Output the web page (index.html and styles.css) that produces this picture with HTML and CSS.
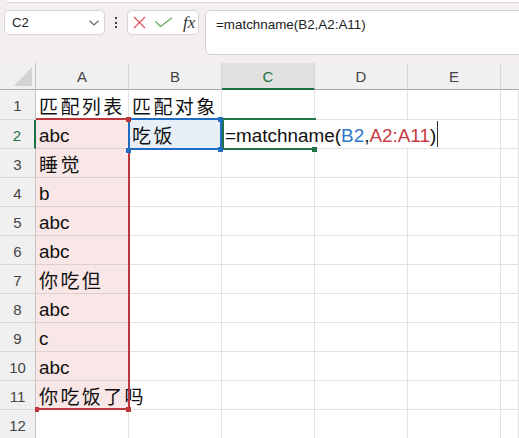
FILE: index.html
```html
<!DOCTYPE html>
<html lang="zh">
<head>
<meta charset="utf-8">
<title>Sheet</title>
<link rel="stylesheet" href="styles.css">
</head>
<body>
<div class="app">
  <div class="ribbon-edge"></div>
  <div class="fbar">
    <div class="namebox">
      <span class="name">C2</span>
      <svg class="chev" width="10" height="6" viewBox="0 0 10 6"><path d="M0.5 0.8 L5 5 L9.5 0.8" fill="none" stroke="#666" stroke-width="1.2"/></svg>
    </div>
    <div class="dots"><i></i><i></i><i></i></div>
    <div class="iconbox">
      <svg width="13" height="13" viewBox="0 0 13 13"><path d="M1 1 L12 12 M12 1 L1 12" stroke="#e2585d" stroke-width="1.3" fill="none"/></svg>
      <svg width="18" height="11" viewBox="0 0 18 11"><path d="M0.5 4.5 L5.5 9.5 L17 0.8" stroke="#5aad5e" stroke-width="1.3" fill="none"/></svg>
      <span class="fx">fx</span>
    </div>
    <div class="formula">=matchname(B2,A2:A11)</div>
  </div>
  <div class="sheet">
    <div class="hd corner"><svg width="18" height="19" viewBox="0 0 18 19"><path d="M18 0 L18 19 L0 19 Z" fill="#d3d3d3"/></svg></div>
    <div class="hd col">A</div>
    <div class="hd col">B</div>
    <div class="hd col active">C</div>
    <div class="hd col">D</div>
    <div class="hd col">E</div>
    <div class="hd col last"></div>

    <div class="rh">1</div><div class="c cjk">匹配列表</div><div class="c cjk">匹配对象</div><div class="c"></div><div class="c"></div><div class="c"></div><div class="c"></div>
    <div class="rh active">2</div><div class="c pk">abc</div><div class="c cjk bl">吃饭</div><div class="c"></div><div class="c"></div><div class="c"></div><div class="c"></div>
    <div class="rh">3</div><div class="c pk cjk">睡觉</div><div class="c"></div><div class="c"></div><div class="c"></div><div class="c"></div><div class="c"></div>
    <div class="rh">4</div><div class="c pk">b</div><div class="c"></div><div class="c"></div><div class="c"></div><div class="c"></div><div class="c"></div>
    <div class="rh">5</div><div class="c pk">abc</div><div class="c"></div><div class="c"></div><div class="c"></div><div class="c"></div><div class="c"></div>
    <div class="rh">6</div><div class="c pk">abc</div><div class="c"></div><div class="c"></div><div class="c"></div><div class="c"></div><div class="c"></div>
    <div class="rh">7</div><div class="c pk cjk">你吃但</div><div class="c"></div><div class="c"></div><div class="c"></div><div class="c"></div><div class="c"></div>
    <div class="rh">8</div><div class="c pk">abc</div><div class="c"></div><div class="c"></div><div class="c"></div><div class="c"></div><div class="c"></div>
    <div class="rh">9</div><div class="c pk">c</div><div class="c"></div><div class="c"></div><div class="c"></div><div class="c"></div><div class="c"></div>
    <div class="rh">10</div><div class="c pk">abc</div><div class="c"></div><div class="c"></div><div class="c"></div><div class="c"></div><div class="c"></div>
    <div class="rh">11</div><div class="c pk cjk">你吃饭了吗</div><div class="c"></div><div class="c"></div><div class="c"></div><div class="c"></div><div class="c"></div>
    <div class="rh">12</div><div class="c"></div><div class="c"></div><div class="c"></div><div class="c"></div><div class="c"></div><div class="c"></div>

    <div class="sel sel-a"></div>
    <div class="sel sel-b"></div>
    <div class="editor">=matchname(<span class="rb">B2</span>,<span class="rr">A2:A11</span>)<span class="caret"></span></div>
    <div class="sel sel-c"></div>
    <div class="hnd red h-a1"></div>
    <div class="hnd red h-a2"></div>
    <div class="hnd red h-a3"></div>
    <div class="hnd blue h-b2"></div>
    <div class="hnd blue h-b3"></div>
    <div class="hnd blue h-b4"></div>
    <div class="hnd green h-c1"></div>
  </div>
</div>
</body>
</html>
```
FILE: styles.css
```css
* { box-sizing: border-box; }
html, body { margin: 0; padding: 0; }
body {
  background: #f3eef0;
  font-family: "Liberation Sans", "Noto Sans CJK SC", sans-serif;
  color: #1a1a1a;
}
.app { width: 519px; height: 438px; overflow: hidden; }
.ribbon-edge {
  height: 3px;
  margin-left: 6px;
  background: #fff;
  border-bottom: 1px solid #ddd7d9;
  border-bottom-left-radius: 6px;
}
.fbar {
  display: flex;
  align-items: flex-start;
  height: 60px;
  padding: 7px 0 0 4px;
}
.namebox {
  width: 101px;
  height: 25px;
  background: #fff;
  border: 1px solid #d9d5d7;
  border-radius: 5px;
  display: flex;
  align-items: center;
  justify-content: space-between;
  padding: 0 5px 0 7px;
}
.name { font-size: 13px; color: #222; }
.chev { margin-top: 1px; }
.dots {
  width: 22px;
  height: 25px;
  display: flex;
  flex-direction: column;
  align-items: center;
  justify-content: center;
  gap: 2.5px;
}
.dots i { width: 2px; height: 2px; background: #444; display: block; }
.iconbox {
  width: 72px;
  height: 25px;
  background: #fff;
  border: 1px solid #d9d5d7;
  border-radius: 5px;
  display: flex;
  align-items: center;
  padding: 0 0 0 5px;
  gap: 9px;
}
.fx {
  font-family: "Liberation Serif", serif;
  font-style: italic;
  font-size: 17px;
  color: #333;
  margin-left: 1px;
}
.formula {
  flex: 1;
  height: 45px;
  margin-left: 6px;
  margin-right: -10px;
  background: #fff;
  border: 1px solid #d5d1d3;
  border-radius: 6px;
  font-size: 13.4px;
  color: #222;
  padding: 6px 0 0 10px;
  line-height: 16px;
}
.sheet {
  position: relative;
  background: #fff;
  display: grid;
  grid-template-columns: 36px repeat(5, 93px) 1fr;
  grid-template-rows: 27px 30px repeat(11, 29px);
}
.hd {
  background: #f0f0f0;
  border-right: 1px solid #d6d6d6;
  border-bottom: 1px solid #ababab;
  display: flex;
  align-items: center;
  justify-content: center;
  font-size: 15px;
  color: #444;
  padding-top: 1px;
}
.hd.corner { border-right-color: #c4c4c4; align-items: flex-end; justify-content: flex-end; padding: 0 3px 3px 0; }
.hd.last { border-right: none; }
.hd.active { background: #e1e1e1; color: #1e7145; border-bottom: 2px solid #1e7145; }
.rh {
  background: #f0f0f0;
  border-right: 1px solid #c4c4c4;
  border-bottom: 1px solid #d8d8d8;
  display: flex;
  align-items: center;
  justify-content: center;
  font-size: 15px;
  color: #444;
  padding-top: 2px;
}
.rh.active { color: #1e7145; border-right: 2px solid #1e7145; }
.c {
  border-right: 1px solid #e1e1e1;
  border-bottom: 1px solid #e1e1e1;
  display: flex;
  align-items: flex-end;
  padding: 0 0 2px 3px;
  font-size: 18.9px;
  line-height: 20px;
  white-space: nowrap;
  overflow: visible;
  color: #111;
}
.c.cjk {
  font-family: "Noto Sans CJK SC", sans-serif;
  font-size: 19px;
  letter-spacing: 2.4px;
  padding-bottom: 3px;
}
.c.pk { background: #f9e6e6; border-bottom-color: #dccfcf; border-right-color: #dccfcf; }
.c.bl { background: #e7eff9; }
.sel { position: absolute; pointer-events: none; }
.sel-a {
  left: 36px; top: 55px; width: 94px; height: 292px;
  border: 2px solid #bf353c; border-left: none;
}
.sel-b {
  left: 128px; top: 55px; width: 94px; height: 32px;
  border: 2px solid #1f6cc0;
}
.sel-c {
  left: 222px; top: 55px; width: 94px; height: 32px;
  border: 2px solid #217346; border-right: none;
}
.editor {
  position: absolute;
  left: 224px; top: 57px; width: 216px; height: 28px;
  background: #fff;
  font-size: 18.9px;
  line-height: 20px;
  padding: 6px 0 0 1px;
  white-space: nowrap;
  color: #111;
}
.rb { color: #2f78cc; }
.rr { color: #c73b44; }
.caret {
  position: absolute;
  left: 213px; top: 1px;
  width: 1px; height: 26px;
  background: #333;
}
.hnd { position: absolute; width: 5px; height: 5px; }
.hnd.red { background: #bf353c; }
.hnd.blue { background: #1f6cc0; }
.hnd.green { background: #217346; }
.h-a1 { left: 126px; top: 54px; }
.h-a2 { left: 126px; top: 344px; }
.h-a3 { left: 35px; top: 344px; width: 4px; }
.h-b2 { left: 218px; top: 54px; }
.h-b3 { left: 218px; top: 84px; }
.h-b4 { left: 126px; top: 85px; }
.h-c1 { left: 312px; top: 84px; }
```
